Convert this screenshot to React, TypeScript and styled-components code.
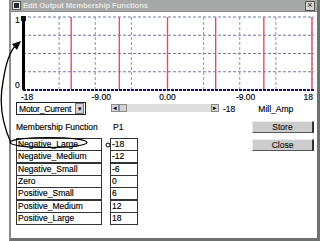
import * as React from "react";
import styled, { createGlobalStyle } from "styled-components";

interface MembershipRow {
  name: string;
  value: number;
}

const rows: MembershipRow[] = [
  { name: "Negative_Large", value: -18 },
  { name: "Negative_Medium", value: -12 },
  { name: "Negative_Small", value: -6 },
  { name: "Zero", value: 0 },
  { name: "Positive_Small", value: 6 },
  { name: "Positive_Medium", value: 12 },
  { name: "Positive_Large", value: 18 },
];

const xLabels = ["-18", "-9.00", "0.00", "-9.00", "18"];

// plot geometry (svg coordinates)
const PLOT_LEFT = 2;
const PLOT_RIGHT = 291;
const PLOT_TOP = 2;
const PLOT_BOTTOM = 75;
const toX = (v: number) => PLOT_LEFT + ((v + 18) / 36) * (PLOT_RIGHT - PLOT_LEFT);

const GlobalStyle = createGlobalStyle`
  body {
    margin: 0;
    background: #ffffff;
    font-family: "Liberation Sans", Arial, sans-serif;
  }
`;

const MembershipChart: React.FunctionComponent = () => {
  const gridX = Array.from({ length: 9 }, (_, i) => PLOT_LEFT + (i * (PLOT_RIGHT - PLOT_LEFT)) / 8);
  const gridY = Array.from({ length: 4 }, (_, i) => PLOT_TOP + (i * (PLOT_BOTTOM - PLOT_TOP)) / 4);

  return (
    <svg width={296} height={77} viewBox="0 0 296 77">
      {gridY.map((y) => (
        <line key={`h${y}`} x1={PLOT_LEFT} x2={PLOT_RIGHT + 2} y1={y} y2={y} stroke="#6f7aa8" strokeDasharray="3 2" />
      ))}
      {gridX.slice(1).map((x) => (
        <line key={`v${x}`} x1={x} x2={x} y1={PLOT_TOP} y2={PLOT_BOTTOM} stroke="#8f96a8" strokeDasharray="3 2" />
      ))}
      {rows.slice(1).map((r) => (
        <line key={r.name} x1={toX(r.value)} x2={toX(r.value)} y1={PLOT_TOP} y2={PLOT_BOTTOM} stroke="#e0505a" strokeWidth={1.4} />
      ))}
      <line x1={PLOT_LEFT} x2={PLOT_RIGHT + 2} y1={PLOT_BOTTOM} y2={PLOT_BOTTOM} stroke="#12127a" strokeWidth={2} strokeDasharray="3 1" />
      <line x1={PLOT_LEFT + 0.5} x2={PLOT_LEFT + 0.5} y1={PLOT_TOP} y2={PLOT_BOTTOM} stroke="#000" strokeWidth={3} />
      <rect x={PLOT_LEFT - 2} y={PLOT_TOP - 1} width={5} height={5} fill="#111" />
    </svg>
  );
};

export default function App() {
  return (
    <>
      <GlobalStyle />
      <Page>
        <Window>
          <TitleBar>
            <SysIcon />
            <Title>Edit Output Membership Functions</Title>
            <CloseBox>×</CloseBox>
          </TitleBar>

          <ChartRow>
            <YLabels>
              <span>1</span>
              <span>0</span>
            </YLabels>
            <MembershipChart />
          </ChartRow>
          <XLabels>
            {xLabels.map((l, i) => (
              <span key={i}>{l}</span>
            ))}
          </XLabels>

          <ControlsRow>
            <Dropdown>
              <span>Motor_Current</span>
              <DropButton>▾</DropButton>
            </Dropdown>
            <ScrollBar>
              <ScrollArrow>◂</ScrollArrow>
              <ScrollThumb />
              <ScrollTrack />
              <ScrollArrow>▸</ScrollArrow>
            </ScrollBar>
            <ValueText>-18</ValueText>
            <UnitText>Mill_Amp</UnitText>
          </ControlsRow>

          <Lower>
            <LeftPane>
              <HeaderRow>
                <HeaderLabel>Membership Function</HeaderLabel>
                <span>P1</span>
              </HeaderRow>
              <Table>
                {rows.map((r) => (
                  <TableRow key={r.name}>
                    <NameCell>{r.name}</NameCell>
                    <ValueCell>{r.value}</ValueCell>
                  </TableRow>
                ))}
              </Table>
            </LeftPane>
            <ButtonColumn>
              <Button>Store</Button>
              <Button>Close</Button>
            </ButtonColumn>
          </Lower>
        </Window>

        <Annotation width={320} height={241} viewBox="0 0 320 241">
          <ellipse cx={48.5} cy={142.5} rx={38.5} ry={5} fill="none" stroke="#000" strokeWidth={1.2} />
          <circle cx={108} cy={145} r={2} fill="#fff" stroke="#000" strokeWidth={1} />
          <path d="M 11 143 Q -3 112 3 82 Q 7 54 16 45" fill="none" stroke="#000" strokeWidth={1.3} />
          <polygon points="21,41 12,44 17,50" fill="#000" />
        </Annotation>
      </Page>
    </>
  );
}

const Page = styled.div`
  position: relative;
  display: flex;
  width: 320px;
  height: 241px;
  padding-left: 9px;
  box-sizing: border-box;
  font-size: 8.5px;
  color: #000;
  -webkit-text-stroke: 0.15px #000;
  overflow: hidden;
`;

const Window = styled.div`
  flex: 1;
  display: flex;
  flex-direction: column;
  background: #fff;
  border-left: 2px solid #8c8c8c;
  border-right: 3px solid #6e716f;
  border-bottom: 3px solid #6e716f;
`;

const TitleBar = styled.div`
  display: flex;
  align-items: center;
  gap: 3px;
  height: 11px;
  padding: 0 2px 0 2px;
  background: #a7a9a8;
  border-bottom: 1px solid #8a8a8a;
  -webkit-text-stroke: 0;
`;

const SysIcon = styled.div`
  width: 5px;
  height: 5px;
  background: #2a2a2a;
  border: 1px solid #e6e6e6;
  outline: 1px solid #555;
`;

const Title = styled.span`
  color: #e4e4e4;
  font-weight: bold;
  font-size: 7.7px;
  letter-spacing: -0.1px;
`;

const CloseBox = styled.div`
  margin-left: auto;
  width: 8px;
  height: 8px;
  display: flex;
  align-items: center;
  justify-content: center;
  background: #d6d6d6;
  border: 1px solid #555;
  font-size: 9px;
  line-height: 1;
  color: #222;
`;

const ChartRow = styled.div`
  display: flex;
  margin-top: 3px;
`;

const YLabels = styled.div`
  width: 10px;
  padding-left: 4px;
  box-sizing: border-box;
  display: flex;
  flex-direction: column;
  justify-content: space-between;
  padding-bottom: 2px;
`;

const XLabels = styled.div`
  display: flex;
  justify-content: space-between;
  height: 10px;
  padding: 0 4px 0 10px;
  line-height: 10px;

  span:nth-child(2) {
    margin-left: 10px;
  }
  span:nth-child(4) {
    margin-left: 12px;
  }
`;

const ControlsRow = styled.div`
  display: flex;
  align-items: center;
  height: 13px;
  padding-left: 5px;
`;

const Dropdown = styled.div`
  display: flex;
  align-items: center;
  justify-content: space-between;
  width: 70px;
  height: 13px;
  box-sizing: border-box;
  border: 1px solid #222;
  padding-left: 2px;
  white-space: nowrap;
  letter-spacing: -0.2px;
`;

const DropButton = styled.div`
  width: 7px;
  height: 9px;
  margin-right: 1px;
  background: #d4d4d4;
  border: 1px solid #777;
  font-size: 7px;
  line-height: 9px;
  text-align: center;
  -webkit-text-stroke: 0;
`;

const ScrollBar = styled.div`
  display: flex;
  width: 108px;
  height: 8px;
  margin-left: 25px;
  margin-top: -1px;
  -webkit-text-stroke: 0;
`;

const ScrollArrow = styled.div`
  width: 8px;
  height: 8px;
  box-sizing: border-box;
  background: #d4d4d4;
  border: 1px solid #8a8a8a;
  font-size: 7px;
  line-height: 6px;
  text-align: center;
`;

const ScrollThumb = styled.div`
  width: 8px;
  background: #d4d4d4;
  border: 1px solid #8a8a8a;
  box-sizing: border-box;
`;

const ScrollTrack = styled.div`
  flex: 1;
  background: #dedede;
`;

const ValueText = styled.span`
  margin-left: 4px;
`;

const UnitText = styled.span`
  margin-left: 23px;
`;

const Lower = styled.div`
  display: flex;
  margin-top: 5px;
`;

const LeftPane = styled.div`
  display: flex;
  flex-direction: column;
  padding-left: 5px;
`;

const HeaderRow = styled.div`
  display: flex;
  align-items: center;
  height: 13px;
`;

const HeaderLabel = styled.span`
  width: 97px;
`;

const Table = styled.div`
  display: flex;
  flex-direction: column;
  margin-top: 5px;
`;

const TableRow = styled.div`
  display: flex;
  gap: 8px;
  height: 13px;
  & + & {
    margin-top: -0.7px;
  }
`;

const Cell = styled.div`
  box-sizing: border-box;
  height: 13px;
  border: 1px solid #333;
  padding-left: 1px;
  line-height: 11px;
`;

const NameCell = styled(Cell)`
  width: 86px;
`;

const ValueCell = styled(Cell)`
  width: 28px;
`;

const ButtonColumn = styled.div`
  display: flex;
  flex-direction: column;
  gap: 6px;
  margin-left: auto;
  margin-right: 3px;
  padding-top: 1px;
`;

const Button = styled.div`
  width: 62px;
  height: 12px;
  box-sizing: border-box;
  background: #cdcdcd;
  border-top: 1px solid #ececec;
  border-left: 1px solid #ececec;
  border-right: 2px solid #333;
  border-bottom: 1px solid #555;
  text-align: center;
  line-height: 10px;
  color: #222;
`;

const Annotation = styled.svg`
  position: absolute;
  left: 0;
  top: 0;
  pointer-events: none;
`;
